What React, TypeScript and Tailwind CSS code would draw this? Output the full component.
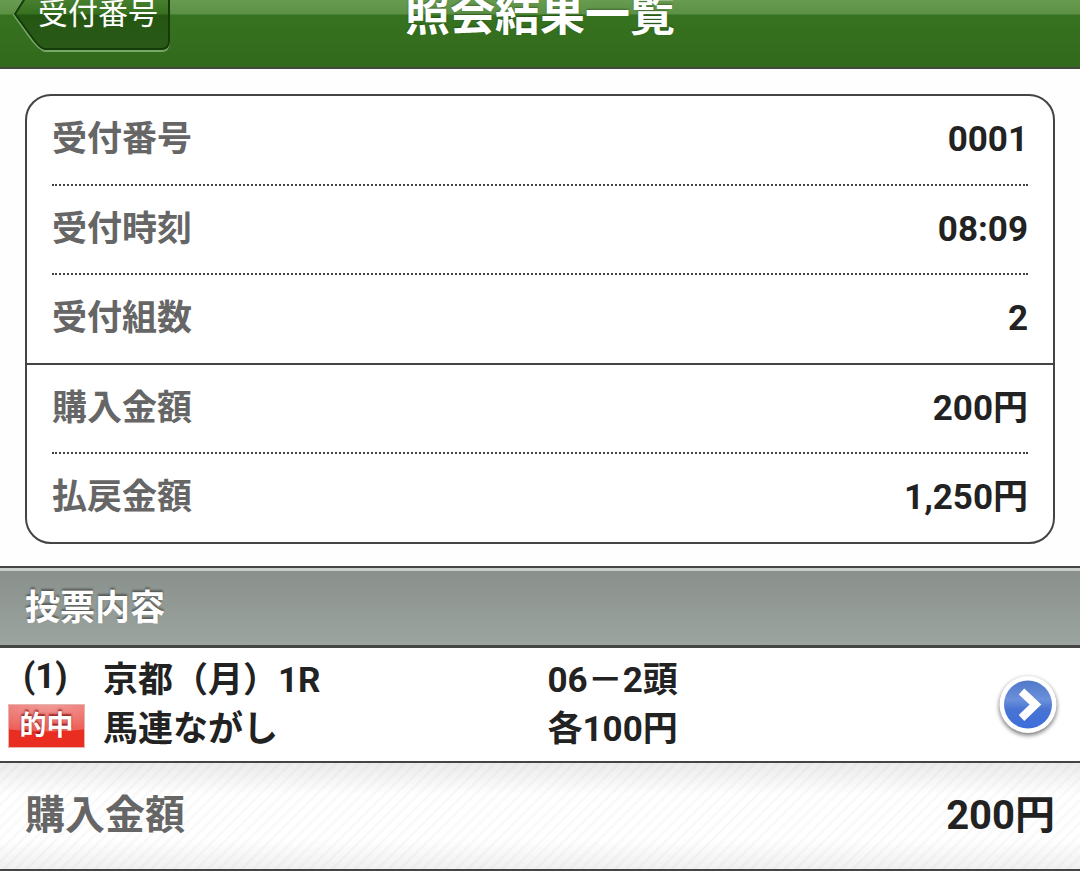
type Row = { label: string; value: string; line: string };

const rows: Row[] = [
  { label: "受付番号", value: "0001", line: "min-h-[90px] mx-[25px] border-b-2 border-dotted" },
  { label: "受付時刻", value: "08:09", line: "min-h-[89px] mx-[25px] border-b-2 border-dotted" },
  { label: "受付組数", value: "2", line: "min-h-[90px] border-b-2 px-[25px]" },
  { label: "購入金額", value: "200円", line: "min-h-[89px] mx-[25px] border-b-2 border-dotted" },
  { label: "払戻金額", value: "1,250円", line: "min-h-[88px] mx-[25px]" },
];

function Header() {
  return (
    <header className="grid h-[69px] grid-cols-[1fr_auto_1fr] items-start border-b-2 border-[#424a3e] bg-[linear-gradient(to_bottom,#679c50_0px,#5b9045_14px,#367320_15px,#32691c_67px)]">
      <button
        type="button"
        className="relative ml-3 flex h-[52px] w-[160px] items-start pl-[26px] text-[30px] leading-[28px] text-white"
      >
        <svg className="absolute inset-0 h-full w-full" viewBox="0 0 160 52" aria-hidden="true">
          <defs>
            <linearGradient id="back" gradientUnits="userSpaceOnUse" x1="0" y1="0" x2="0" y2="49">
              <stop offset="0" stopColor="#467f2d" />
              <stop offset="0.28" stopColor="#37701f" />
              <stop offset="0.31" stopColor="#245612" />
              <stop offset="1" stopColor="#2b5a18" />
            </linearGradient>
          </defs>
          <path d="M14 -5 L2 15 L20 40 Q28 50 33 51 H149 Q157 51 157 42 V-5" fill="none" stroke="#78a866" strokeWidth="2" />
          <path d="M15 -5 L3 14 L22 40 Q29 49 33 49 H149 Q157 49 157 41 V-5 Z" fill="url(#back)" stroke="#143b09" strokeWidth="2" />
        </svg>
        <span className="relative">受付番号</span>
      </button>
      <h1 className="text-[45px] leading-[32px] font-bold text-white [text-shadow:0_-1px_2px_rgba(0,0,0,0.3)]">照会結果一覧</h1>
    </header>
  );
}

function ArrowIcon() {
  return (
    <svg className="h-[70px] w-[70px]" viewBox="0 0 70 70" aria-hidden="true">
      <defs>
        <linearGradient id="disc" x1="0" y1="0" x2="0" y2="1">
          <stop offset="0" stopColor="#5078c8" />
          <stop offset="0.4" stopColor="#6b90dc" />
          <stop offset="0.6" stopColor="#4874d2" />
          <stop offset="1" stopColor="#3c6ddb" />
        </linearGradient>
        <filter id="soft" x="-20%" y="-20%" width="140%" height="140%">
          <feGaussianBlur stdDeviation="2" />
        </filter>
      </defs>
      <circle cx="36" cy="36.5" r="29" fill="#000" opacity="0.5" filter="url(#soft)" />
      <circle cx="36" cy="34.5" r="28.5" fill="#fff" />
      <circle cx="36" cy="34.5" r="24" fill="url(#disc)" />
      <path d="M29.5 21.5 L43.5 34.5 L29.5 48" fill="none" stroke="#fff" strokeWidth="8" />
    </svg>
  );
}

export default function App() {
  return (
    <div className="min-h-screen bg-[#fefefe] font-['Roboto','Noto_Sans_CJK_JP',sans-serif] text-[#222]">
      <Header />
      <main>
        <dl className="mx-[25px] mt-[25px] mb-[22px] rounded-[26px] border-2 border-[#444] bg-white text-[35px] leading-[50px] font-bold">
          {rows.map((r) => (
            <div key={r.label} className={`flex items-start justify-between border-[#444] pt-[19px] ${r.line}`}>
              <dt className="text-[#666]">{r.label}</dt>
              <dd>{r.value}</dd>
            </div>
          ))}
        </dl>

        <section>
          <h2 className="h-[82px] border-t-2 border-b-3 border-[#444] bg-[linear-gradient(to_bottom,#cbd0cd_0px,#cbd0cd_3px,#8a918c_3px,#9ca49f_100%)] px-[25px] pt-[16px] text-[35px] leading-[50px] font-bold text-white [text-shadow:0_-2px_2px_rgba(0,0,0,0.4)]">
            投票内容
          </h2>
          <a
            href="#detail"
            className="grid h-[115px] grid-cols-[103px_5fr_5fr_88px] items-center border-b-2 border-[#444] bg-white text-[35px] leading-[49px] font-bold"
          >
            <span className="flex flex-col items-start self-start pt-1">
              <span className="pl-[23px]">(1)</span>
              <span className="mt-[3px] ml-2 flex h-[44px] w-[77px] items-center justify-center border border-[#e5b5b0] bg-[radial-gradient(ellipse_130%_64%_at_50%_0%,#f09a98_0%,#ee5e57_97%,#e92d20_100%)] text-[27px] leading-[42px] text-white [text-shadow:0_-2px_2px_rgba(120,0,0,0.7)]">
                的中
              </span>
            </span>
            <span>
              京都（月）1R
              <br />
              馬連ながし
            </span>
            <span>
              06－2頭
              <br />
              各100円
            </span>
            <ArrowIcon />
          </a>
        </section>

        <dl className="flex h-[108px] items-center justify-between border-b-2 border-[#444] bg-[linear-gradient(to_bottom,rgba(0,0,0,0.08)_0%,rgba(0,0,0,0)_30%,rgba(0,0,0,0)_72%,rgba(0,0,0,0.06)_100%),repeating-linear-gradient(135deg,#fff_0px,#fff_4px,#f7f7f7_6px,#fff_8px)] px-[25px] text-[40px] leading-[58px] font-bold">
          <dt className="text-[#666]">購入金額</dt>
          <dd>200円</dd>
        </dl>
      </main>
    </div>
  );
}
